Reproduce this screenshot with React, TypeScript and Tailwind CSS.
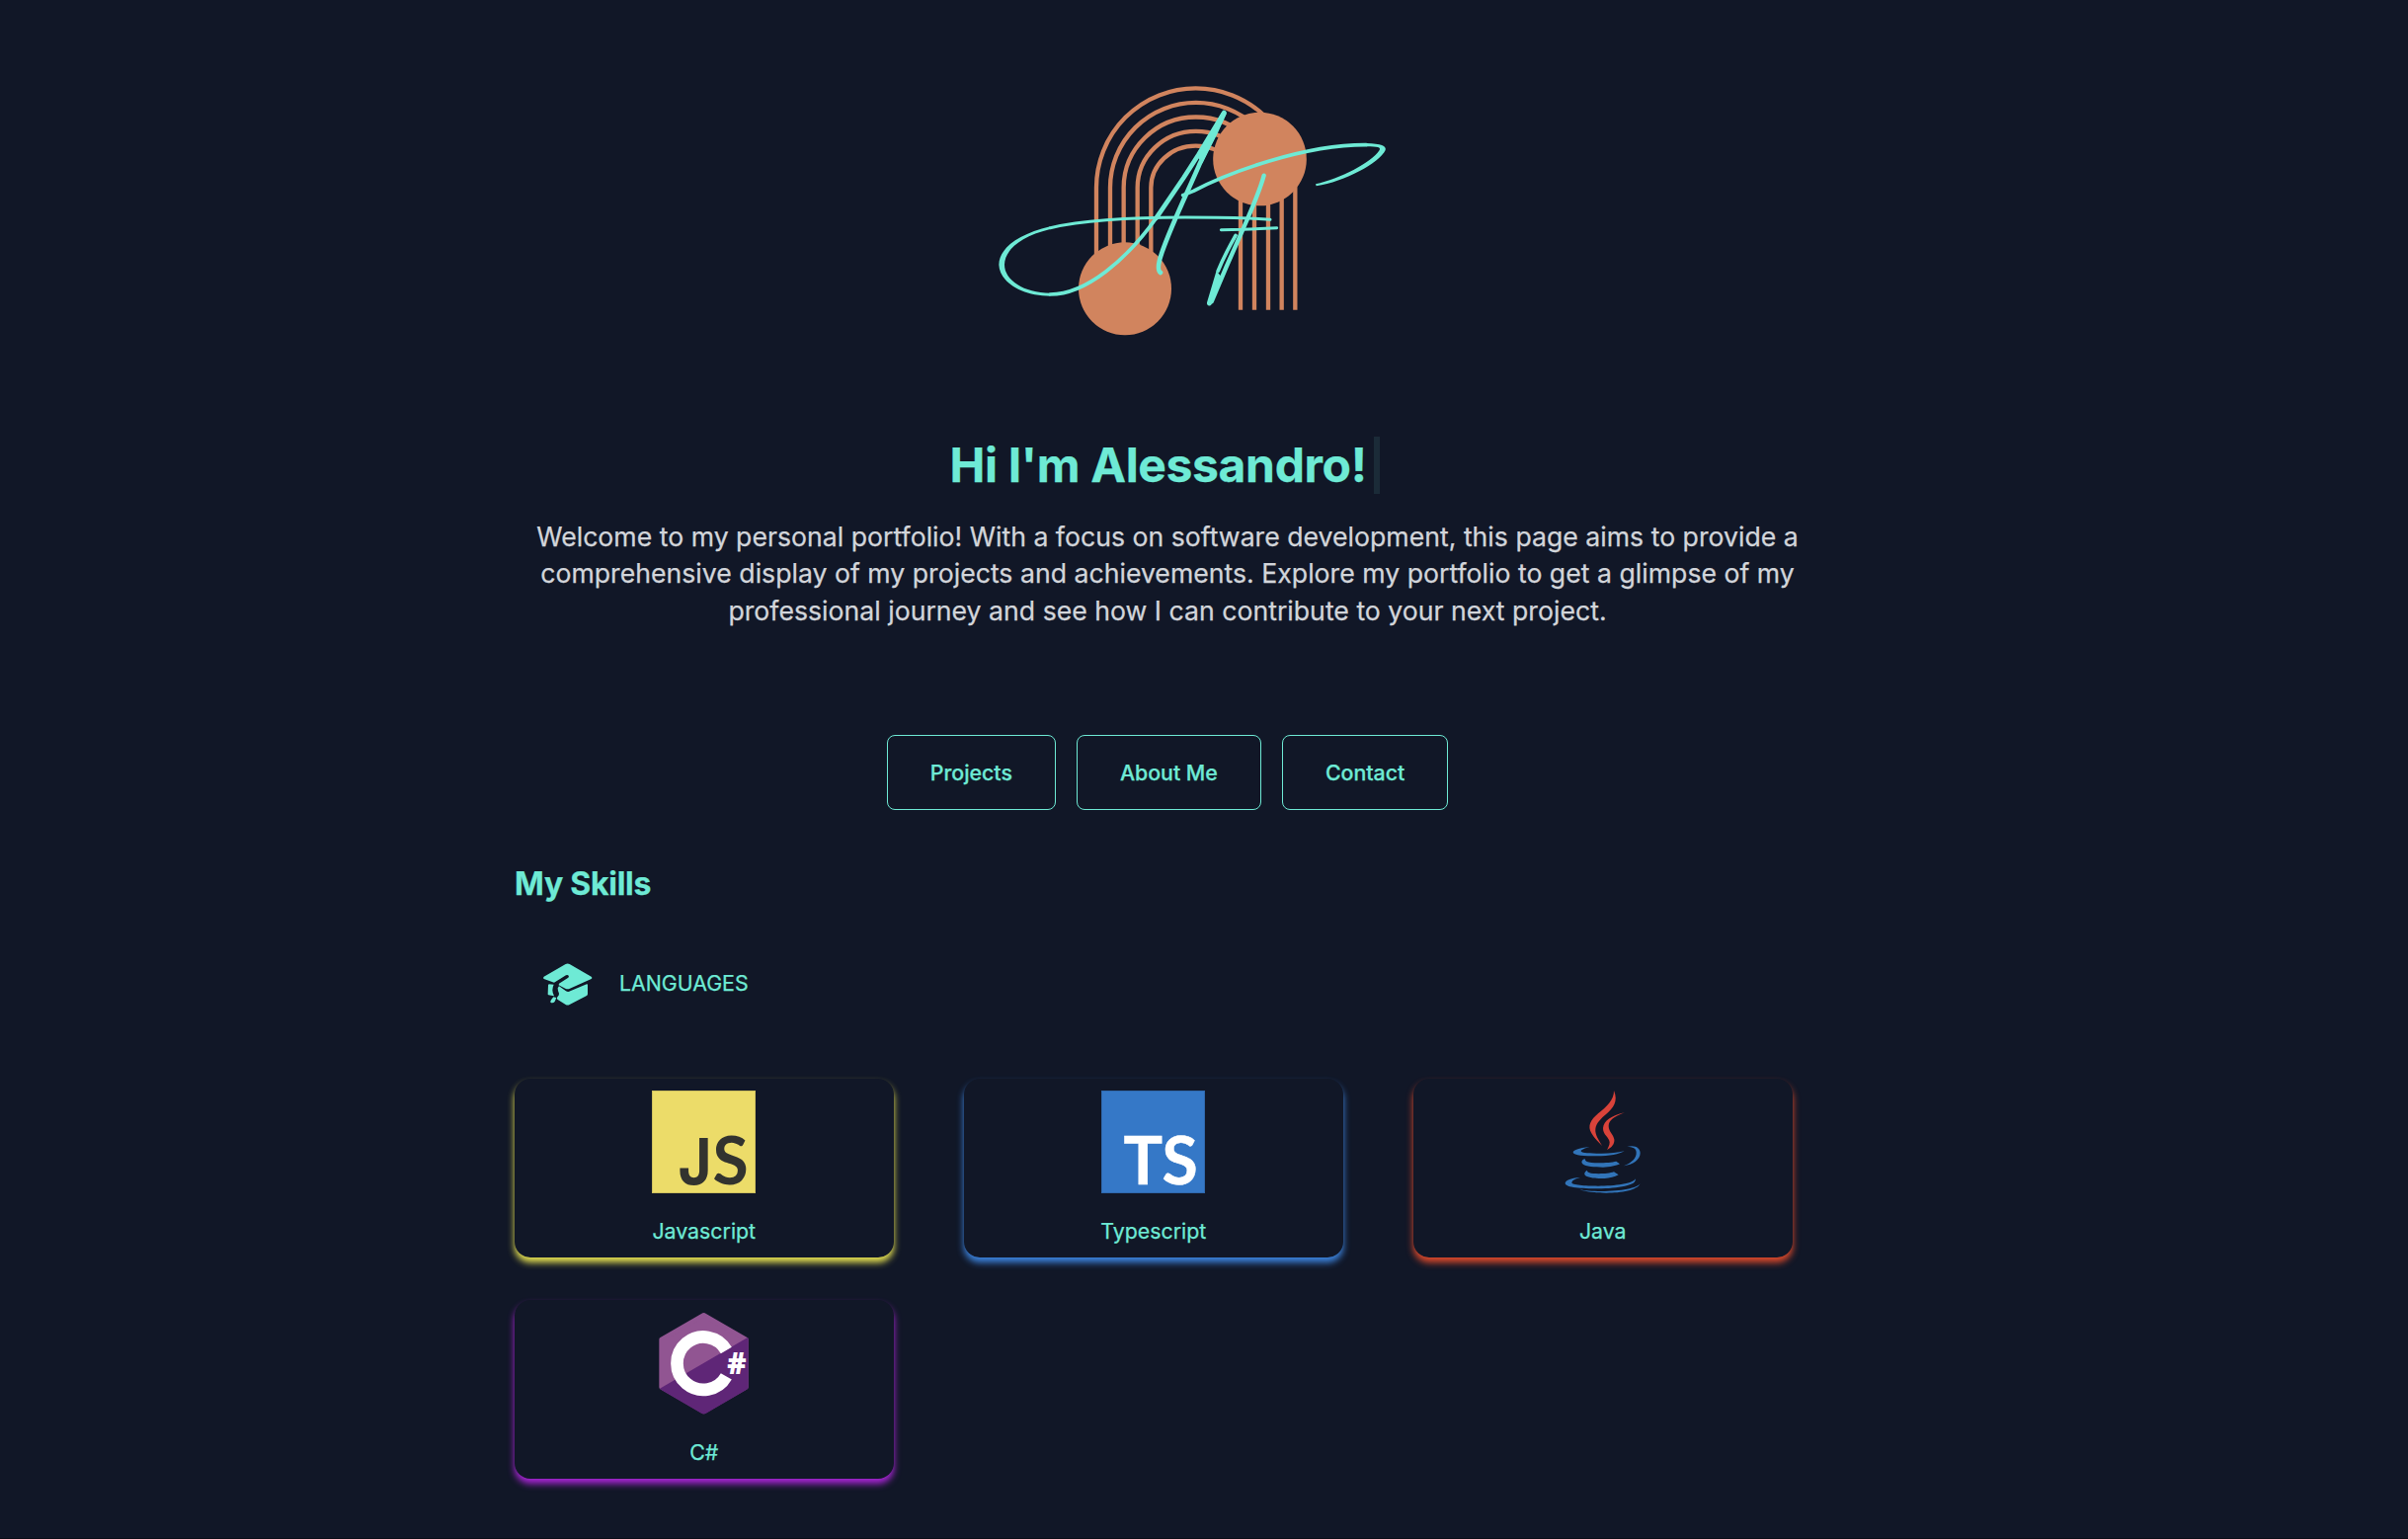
import type { ReactNode } from "react";

function Logo() {
  return (
    <svg viewBox="-168 0 1428 870" className="h-[290px] w-[476px]" fill="none">
      <g stroke="#d1845e" strokeWidth="13">
        <path d="M330 600V360A302 302 0 0 1 934 360V731" />
        <path d="M372 600V360A260 258 0 0 1 893 360V731" />
        <path d="M413 600V360A219 214 0 0 1 852 360V731" />
        <path d="M455 600V360A177 171 0 0 1 810 360V731" />
        <path d="M496 600V360A136 127 0 0 1 768 360V731" />
      </g>
      <circle cx="826.500" cy="273" r="142" fill="#d1845e" />
      <circle cx="417" cy="667" r="141" fill="#d1845e" />
      <g stroke="#6eead5" strokeLinecap="round" strokeLinejoin="round">
        <path d="M858 457C790 451 700 450 600 450C440 450 300 456 190 482" strokeWidth="9" />
        <path d="M190 684C300 684 425 575 512 452" strokeWidth="11" />
        <path d="M512 452L595 330L640 260L718 132" strokeWidth="14" />
        <path d="M718 134L642 292C606 375 555 480 528 560C517 592 516 612 525 618" strokeWidth="14" />
        <path d="M593 383L625 370C730 315 960 229 1150 230" strokeWidth="11" />
        <path d="M839 323C826 372 800 430 775 487L725 600L680 706" strokeWidth="13" />
        <path d="M753 505C735 537 715 575 700 612" strokeWidth="11" />
        <path d="M709 488L775 487L878 482" strokeWidth="9" />
      </g>
      <g fill="#6eead5">
        <path d="M190 478C90 502 35 545 34 594C36 645 100 689 190 689V680C110 680 51 640 51 594C52 550 98 508 190 486Z" />
        <path d="M1150 225C1195 226 1212 234 1208 246C1190 284 1085 342 998 355L996 349C1070 332 1165 285 1190 246C1195 238 1185 235 1150 235Z" />
        <path d="M712 130L634 262L642 272L652 285L664 262Q698 200 725 136Z" />
        <path d="M695 611L704 624L709 629L730 600L680 714C675 722 664 719 666 709Z" />
      </g>
    </svg>
  );
}

function GraduationCap() {
  return (
    <svg viewBox="80 40 165 140" className="h-[46.67px] w-[55px]" fill="#6eead5">
      <path d="M157 49Q163 46 169 49L235 87Q240 91 235 94L170 123Q163 126 156 123L136 113L137 108L165 90Q168 87 166 84Q163 80 158 83L122 105L91 94Q87 91 91 87Z" />
      <path d="M137 116L157 130Q164 135 171 131L221 110Q224 109 224 113V140Q224 143 221 145L169 172Q163 175 157 172L132 156Q129 153 132 149Q138 143 137 138Q133 130 133 122Z" />
      <path d="M106 110L121 111Q117 119 117 128Q117 137 122 146L105 143Q102 142 103 139L104 113Z" />
      <path d="M120 149L129 151L124 163Q118 169 111 165Q110 160 114 156Z" />
    </svg>
  );
}

function JavascriptLogo() {
  return (
    <svg viewBox="0 0 105 104" className="-ml-px h-[104px] w-[105px] shrink-0 overflow-visible">
      <rect x="0.5" y="0.500" width="104" height="103" fill="#ecdc69" stroke="#cfc15f" />
      <g fill="#32332f" fontWeight="700">
        <text x="26.500" y="94.700" fontSize="65" className="font-['Inter']" textLength="34" lengthAdjust="spacingAndGlyphs">J</text>
        <text x="61.500" y="94.900" fontSize="66" className="font-['Lato']">S</text>
      </g>
    </svg>
  );
}

function TypescriptLogo() {
  return (
    <svg viewBox="0 0 105 104" className="-ml-px h-[104px] w-[105px] shrink-0 overflow-visible">
      <rect x="0.5" y="0.500" width="104" height="103" fill="#3578c7" stroke="#2f69ae" />
      <g fill="#fff" stroke="#fff" strokeWidth="0.5" fontWeight="700" fontSize="66" className="font-['Lato']">
        <text x="22.500" y="94.900">T</text>
        <text x="61.500" y="94.900">S</text>
      </g>
    </svg>
  );
}

function JavaLogo() {
  return (
    <svg viewBox="-14 27 315 312" className="-ml-px h-[104px] w-[105px] shrink-0">
      <g fill="#d9433a">
        <path d="M178 27C179 55 155 77 130 97C107 116 97 135 110 157C119 173 132 184 143 196C133 179 120 161 122 144C124 125 138 113 155 98C176 80 192 60 178 27Z" />
        <path d="M210 94C170 104 147 118 145 141C144 161 164 169 165 184C165 193 161 200 157 207C171 201 181 189 179 175C177 161 162 152 162 135C162 117 180 106 210 94Z" />
      </g>
      <g fill="#3174b9">
        <path d="M105 198C70 202 54 208 54 215C56 224 90 226 125 226C165 226 195 220 210 211C185 217 160 219 125 218C95 217 78 216 78 211C78 207 90 202 105 198Z" />
        <path d="M218 198C240 191 258 200 258 217C258 238 235 252 208 256C232 246 247 232 246 215C246 203 235 198 218 198Z" />
        <path d="M90 234C80 238 78 244 83 250C92 258 120 260 145 260C165 259 185 256 196 250L185 242C165 247 110 249 96 243C91 240 90 237 90 234Z" />
        <path d="M97 269C88 274 87 280 91 285C100 292 125 295 150 294C165 293 180 290 192 283L178 274C160 281 115 281 104 277C98 275 97 272 97 269Z" />
        <path d="M76 291C45 293 30 301 30 309C32 322 80 325 130 325C190 325 250 315 243 295C238 310 180 317 130 317C90 317 50 314 50 307C51 299 62 295 76 291Z" />
        <path d="M74 328C110 342 240 346 258 310C250 323 200 333 140 333C110 333 90 331 74 328Z" />
      </g>
    </svg>
  );
}

function CSharpLogo() {
  return (
    <svg viewBox="15 23 315 312" className="-ml-px h-[104px] w-[105px] shrink-0 overflow-visible">
      <path
        d="M172.500 33L301 107V252L172.500 326L44 252V107Z"
        fill="#915592"
        stroke="#915592"
        strokeWidth="14"
        strokeLinejoin="round"
      />
      <path d="M306 101Q308 104 308 108V251Q308 256 303 259L180 331Q172.500 335 165 331L42 259L39 256Z" fill="#5f2677" />
      <path d="M241 140A80 80 0 1 0 241 219" fill="none" stroke="#fff" strokeWidth="38" />
      <text x="244" y="212" fontSize="90" fontWeight="800" fill="#fff" className="font-['Open_Sans']" textLength="58" lengthAdjust="spacingAndGlyphs">#</text>
    </svg>
  );
}

function SkillCard({ name, shadow, children }: { name: string; shadow: string; children: ReactNode }) {
  return (
    <div className={`flex h-[181px] flex-col items-center rounded-[16px] bg-[#111727] pt-3 ${shadow}`}>
      {children}
      <span className="mr-[0.5px] mt-[22px] text-[21.33px] leading-8">{name}</span>
    </div>
  );
}

function NavButton({ children }: { children: ReactNode }) {
  return (
    <button className="h-[76px] rounded-lg border border-[#6eead5] px-[43px] pt-[2px] text-[21.33px] font-medium">
      {children}
    </button>
  );
}

export default function App() {
  return (
    <div className="h-[1558px] overflow-hidden border-b border-[#0a0d17] bg-[#111727] pl-[521px] pt-[70px] font-['Inter',sans-serif] text-[#6eead5] [-webkit-text-stroke:0.25px]">
      <main className="w-[1322px]">
        <header className="flex flex-col items-center">
          <Logo />
          <div className="mr-[6px] mt-[82px] flex h-[58px]">
            <h1 className="text-[48px] font-bold leading-[58.5px] tracking-[-0.35px]">Hi I'm Alessandro!</h1>
            <span className="ml-[7px] w-[6px] bg-[#1b2b38]" />
          </div>
          <p className="mt-[25px] text-center text-[26.67px] leading-[37.4px] text-[#d2d5da]">
            Welcome to my personal portfolio! With a focus on software development, this page aims to provide a
            <br />
            comprehensive display of my projects and achievements. Explore my portfolio to get a glimpse of my
            <br />
            professional journey and see how I can contribute to your next project.
          </p>
          <nav className="mt-[107px] flex gap-[21px]">
            <NavButton>Projects</NavButton>
            <NavButton>About Me</NavButton>
            <NavButton>Contact</NavButton>
          </nav>
        </header>
        <section>
          <h2 className="mt-[53px] text-[32px] font-bold leading-[43px] tracking-[-0.25px]">My Skills</h2>
          <div className="mt-[57px] flex items-center gap-[25.5px] pl-[25.5px]">
            <GraduationCap />
            <h3 className="mb-[3px] text-[21.33px] leading-8">LANGUAGES</h3>
          </div>
          <div className="mt-[72px] grid grid-cols-[384px_384px_384px] gap-x-[71px] gap-y-[43px]">
            <SkillCard name="Javascript" shadow="shadow-[0_5px_7px_#e8e351]">
              <JavascriptLogo />
            </SkillCard>
            <SkillCard name="Typescript" shadow="shadow-[0_5px_7px_#3d85e0]">
              <TypescriptLogo />
            </SkillCard>
            <SkillCard name="Java" shadow="shadow-[0_5px_7px_#e04a2b]">
              <JavaLogo />
            </SkillCard>
            <SkillCard name="C#" shadow="shadow-[0_5px_7px_#a925d6]">
              <CSharpLogo />
            </SkillCard>
          </div>
        </section>
      </main>
    </div>
  );
}
